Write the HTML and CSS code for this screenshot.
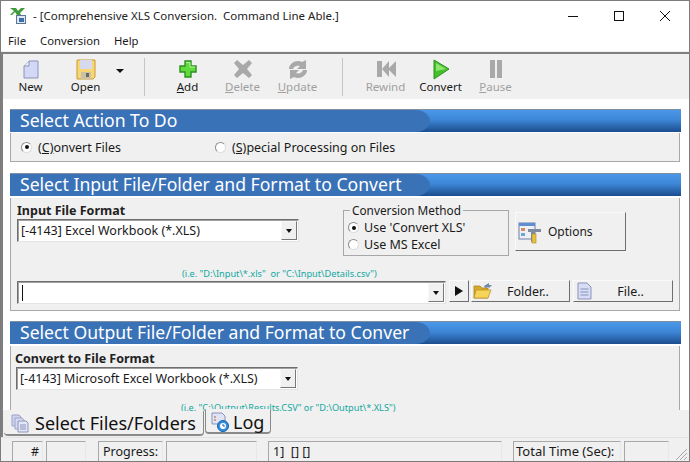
FILE: index.html
```html
<!DOCTYPE html>
<html lang="en">
<head>
  <meta charset="UTF-8">
  <meta name="viewport" content="width=device-width, initial-scale=1.0">
  <title>Comprehensive XLS Conversion</title>
  <link rel="stylesheet" href="styles.css">
</head>
<body>
  <div class="window">
    <!-- title bar -->
    <div class="titlebar">
      <svg class="app-icon" width="18" height="18" viewBox="0 0 18 18">
        <path d="M1 1h6l2 3 3-3h4l-5 5 1 2H8L6 5 3 8H1l4-4z" fill="#3f9a3a"/>
        <rect x="7.500" y="8.500" width="9" height="8" fill="#dfe7f2" stroke="#5b7596"/>
        <rect x="10" y="11" width="5" height="4" fill="#3d6ea8"/>
      </svg>
      <span class="title-text">- [Comprehensive XLS Conversion.  Command Line Able.]</span>
      <div class="win-buttons">
        <svg width="12" height="12" viewBox="0 0 12 12"><path d="M1 6.500h10" stroke="#111" fill="none"/></svg>
        <svg width="12" height="12" viewBox="0 0 12 12"><rect x="1.500" y="1.500" width="9" height="9" stroke="#111" fill="none"/></svg>
        <svg width="12" height="12" viewBox="0 0 12 12"><path d="M1 1l10 10M11 1L1 11" stroke="#111" fill="none"/></svg>
      </div>
    </div>

    <div class="menubar">
      <span>File</span><span>Conversion</span><span>Help</span>
    </div>

    <!-- toolbar -->
    <div class="toolbar">
      <div class="tool">
        <svg width="24" height="24" viewBox="0 0 24 24"><path d="M10 4h9v17H5V9z" fill="#d3d8f6" stroke="#8a93b8"/><path d="M10 4v5H5" fill="#eef0fc" stroke="#8a93b8"/></svg>
        <span>New</span>
      </div>
      <div class="tool">
        <svg width="24" height="24" viewBox="0 0 24 24"><path d="M3 3h18v17l-2 2H3z" fill="#f7d774" stroke="#c99a2e"/><rect x="6" y="3" width="12" height="9" fill="#d7d9ee"/><rect x="7" y="15" width="10" height="7" fill="#c9c2a8"/><rect x="12" y="16" width="3" height="4" fill="#6d6a5c"/></svg>
        <span>Open</span>
      </div>
      <div class="tool-arrow"><i></i></div>
      <div class="tool-sep"></div>
      <div class="tool">
        <svg width="24" height="24" viewBox="0 0 24 24"><path d="M9 4h6v5h5v6h-5v5H9v-5H4V9h5z" fill="#5fdc3c" stroke="#2d8f22" stroke-width="1.400"/><path d="M10 5.500h4v4.500h5" fill="none" stroke="#b8f59c"/></svg>
        <span><u>A</u>dd</span>
      </div>
      <div class="tool disabled">
        <svg width="24" height="24" viewBox="0 0 24 24"><path d="M6 3l6 5 6-5 3 3-5 6 5 6-3 3-6-5-6 5-3-3 5-6-5-6z" fill="#a9a9a9"/></svg>
        <span><u>D</u>elete</span>
      </div>
      <div class="tool disabled">
        <svg width="24" height="24" viewBox="0 0 24 24"><path d="M3 12c0-6 8-10 13-7l4-2v9h-9l3-3c-3-1-6 0-7 3zM21 13c0 6-8 10-13 7l-4 2v-9h9l-3 3c3 1 6 0 7-3z" fill="#a9a9a9"/></svg>
        <span><u>U</u>pdate</span>
      </div>
      <div class="tool-sep"></div>
      <div class="tool disabled">
        <svg width="24" height="24" viewBox="0 0 24 24"><path d="M3 4h5v16H3zM8 12l7-8v16zM14 12l8-8v16z" fill="#a9a9a9"/></svg>
        <span>Rewind</span>
      </div>
      <div class="tool">
        <svg width="24" height="24" viewBox="0 0 24 24"><path d="M5 3l15 9-15 10z" fill="#45c02c" stroke="#2f8f22"/><path d="M7 6l10 6-10 2z" fill="#8ce66a"/></svg>
        <span>Convert</span>
      </div>
      <div class="tool disabled">
        <svg width="24" height="24" viewBox="0 0 24 24"><path d="M6 3h5v18H6zM13 3h5v18h-5z" fill="#a9a9a9"/></svg>
        <span><u>P</u>ause</span>
      </div>
    </div>

    <div class="content">
      <!-- action -->
      <section class="section section-action">
        <h2 class="bar"><span>Select Action To Do</span></h2>
        <div class="panel action-panel">
          <label class="radio action-first"><i class="dot on"></i><span><u>(C)</u>onvert Files</span></label>
          <label class="radio"><i class="dot"></i><span><u>(S)</u>pecial Processing on Files</span></label>
        </div>
      </section>

      <!-- input -->
      <section class="section">
        <h2 class="bar"><span>Select Input File/Folder and Format to Convert</span></h2>
        <div class="panel input-panel">
          <div class="format-row">
            <div class="format-col">
              <div class="field-label">Input File Format</div>
              <div class="combo format-combo"><span class="combo-text">[-4143] Excel Workbook (*.XLS)</span><b class="combo-btn"><i></i></b></div>
            </div>
            <fieldset class="method">
              <legend>Conversion Method</legend>
              <label class="radio"><i class="dot on"></i><span>Use 'Convert XLS'</span></label>
              <label class="radio"><i class="dot"></i><span>Use MS Excel</span></label>
            </fieldset>
            <div class="btn options-btn">
              <svg width="26" height="26" viewBox="0 0 26 26"><rect x="2" y="4" width="16" height="16" fill="#eef0f6" stroke="#6f7fa8"/><rect x="2" y="4" width="16" height="3" fill="#5f8fd0"/><rect x="4" y="9" width="4" height="3" fill="#d88a5a"/><rect x="4" y="14" width="4" height="3" fill="#6aa8d8"/><path d="M11 10h13v3H18v10h-4V13h-3z" fill="#7d8aa0"/><rect x="15" y="15" width="4" height="9" fill="#e8c040" stroke="#a88a20" stroke-width=".6"/></svg>
              <span>Options</span>
            </div>
          </div>
          <div class="hint input-hint">(i.e. "D:\Input\*.xls"  or "C:\Input\Details.csv")</div>
          <div class="path-row">
            <div class="combo path-combo"><span class="caret"></span><b class="combo-btn"><i></i></b></div>
            <div class="btn play-btn"><i></i></div>
            <div class="btn browse-btn">
              <svg width="20" height="20" viewBox="0 0 20 20"><path d="M1 5h6l2 2h6v10H1z" fill="#d9a92a" stroke="#a67c14" stroke-width=".7"/><path d="M3 9h15l-3 8H1z" fill="#f6d45a" stroke="#b88d1c" stroke-width=".7"/><path d="M11 5l5-3v2l3 0-3 3-1-1-3 1z" fill="#6f87a8"/></svg>
              <span>Folder..</span>
            </div>
            <div class="btn browse-btn file-btn">
              <svg width="20" height="20" viewBox="0 0 20 20"><path d="M3 2h9l4 4v12H3z" fill="#d8dcf6" stroke="#8a93b8"/><path d="M5.500 8h8M5.500 11h8M5.500 14h8" stroke="#8a93b8"/></svg>
              <span>File..</span>
            </div>
          </div>
        </div>
      </section>

      <!-- output -->
      <section class="section section-output">
        <h2 class="bar output-bar"><span>Select Output File/Folder and Format to Conver</span></h2>
        <div class="panel output-panel">
          <div class="field-label">Convert to File Format</div>
          <div class="combo format-combo"><span class="combo-text">[-4143] Microsoft Excel Workbook (*.XLS)</span><b class="combo-btn"><i></i></b></div>
          <div class="hint output-hint">(i.e. "C:\Output\Results.CSV" or "D:\Output\*.XLS")</div>
        </div>
      </section>
    </div>

    <!-- tabs -->
    <div class="tabs">
      <div class="tab tab-active">
        <svg width="20" height="20" viewBox="0 0 20 20"><path d="M2 2h7l2 2v9H2z" fill="#cfd3ee" stroke="#9aa2c8"/><path d="M5 5h7l2 2v9H5z" fill="#d9dcf4" stroke="#9aa2c8"/><path d="M8 8h8l2 2v9H8z" fill="#e3e6f8" stroke="#8a93b8"/><path d="M10 12h6M10 14h6M10 16h6" stroke="#8a93b8"/></svg>
        <span>Select Files/Folders</span>
      </div>
      <div class="tab tab-log">
        <svg width="20" height="20" viewBox="0 0 20 20"><path d="M2 1h10l3 3v8H2z" fill="#dfe3f6" stroke="#8a93b8"/><path d="M4 5h2M4 8h2" stroke="#c05a30"/><circle cx="13" cy="14" r="5.500" fill="#2f8fe0" stroke="#1c5fa8"/><circle cx="13" cy="14" r="3" fill="#fff"/><path d="M13 12v2h2" stroke="#1c5fa8" fill="none"/></svg>
        <span>Log</span>
      </div>
    </div>

    <!-- status bar -->
    <div class="statusbar">
      <div class="cell c-num">#</div>
      <div class="cell c-count"></div>
      <div class="cell c-progress">Progress:</div>
      <div class="cell c-bar"></div>
      <div class="cell c-msg">1]  [] []</div>
      <div class="cell c-total">Total Time (Sec):</div>
      <div class="cell c-time"></div>
      <svg class="grip" width="14" height="14" viewBox="0 0 14 14"><path d="M13 2L2 13M13 6L6 13M13 10L10 13" stroke="#a8a8a8" fill="none"/></svg>
    </div>
  </div>
</body>
</html>
```

FILE: styles.css
```css
html, body { margin: 0; padding: 0; }
body { width: 690px; height: 462px; overflow: hidden; font-family: "Noto Sans", sans-serif; font-size: 12.500px; color: #1a1a1a; background: #fff; }

.window { width: 690px; height: 462px; box-sizing: border-box; border: 1px solid #7c7c7c; border-bottom: 0; display: flex; flex-direction: column; overflow: hidden; background: #f0f0f0; }

/* title + menu */
.titlebar { height: 29px; flex: none; display: flex; align-items: center; padding-left: 8px; background: #fff; }
.app-icon { flex: none; margin-right: 6px; }
.title-text { white-space: pre; font-size: 11.500px; color: #222; }
.win-buttons { margin-left: auto; display: flex; gap: 34px; padding-right: 18px; }
.menubar { height: 21px; flex: none; display: flex; gap: 14px; align-items: center; padding-left: 7px; font-size: 11.300px; background: #fff; }

/* toolbar */
.toolbar { flex: none; display: flex; padding-top: 3px; height: 42px; background: #f0f0f0; border-top: 2px solid #7f7f7f; border-left: 2px solid #7f7f7f; margin-top: 1px; }
.tool { width: 55px; display: flex; flex-direction: column; align-items: center; font-size: 11.500px; line-height: 14px; }
.tool svg { flex: none; height: 24px; margin-bottom: -1px; }
.tool.disabled { color: #a0a0a0; }
.tool-arrow { width: 14px; display: flex; justify-content: center; padding-top: 12px; }
.tool-arrow i { width: 0; height: 0; border: 4px solid transparent; border-top: 4px solid #111; border-bottom: 0; }
.tool-sep { width: 1px; height: 38px; background: #c4c4c4; margin: 1px 15px 0 17px; }

/* sections */
.content { flex: none; height: 311px; padding: 10px 0 0 9px; background: #fff; border-left: 2px solid #7f7f7f; box-sizing: border-box; }
.section { width: 671px; margin-bottom: 10px; margin-left: -2px; }
.section-action { margin-bottom: 11px; }
.section-output { margin-bottom: 0; }
.bar { margin: 0; height: 23px; border-top: 1px solid #7f8f9f; box-sizing: border-box; background: linear-gradient(#4a97e8, #3d86d6 45%, #1b4d8d); display: flex; font-weight: normal; font-size: 17.600px; color: #fff; }
.bar span { width: 420px; padding-left: 10px; box-sizing: border-box; background: #3a72b8; line-height: 21px; white-space: nowrap; border-radius: 0 16px 16px 0 / 0 12px 12px 0; }
.panel { background: #f0f0f0; border: 1px solid #a8a8a8; border-top: 0; margin-right: 1px; box-sizing: border-box; }

.action-panel { height: 29px; margin-top: 1px; display: flex; align-items: center; padding: 0 0 0 10px; }
.action-first { width: 194px; }
.radio { display: flex; align-items: center; gap: 6px; }
.dot { width: 11px; height: 11px; flex: none; box-sizing: border-box; border-radius: 50%; background: #fff; border: 1px solid #8c8c8c; border-right-color: #ddd; border-bottom-color: #ddd; display: flex; align-items: center; justify-content: center; }
.dot.on::after { content: ""; width: 4px; height: 4px; border-radius: 50%; background: #111; }

.input-panel { height: 113px; margin-top: 2px; padding: 5px 6px 0; }
.format-row { display: flex; align-items: flex-start; }
.format-col { width: 326px; }
.field-label { font-weight: bold; font-size: 12.500px; line-height: 16px; color: #222; }
.combo { display: flex; height: 23px; background: #fff; box-sizing: border-box; border: 1px solid; border-color: #6e6e6e #e4e4e4 #e4e4e4 #6e6e6e; box-shadow: inset 1px 1px 0 #a0a0a0; align-items: center; }
.format-combo { width: 282px; }
.combo-text { padding-left: 3px; white-space: nowrap; flex: 1; }
.combo-btn { width: 16px; height: 19px; margin-right: 1px; flex: none; box-sizing: border-box; background: #f0f0f0; border: 1px solid; border-color: #f8f8f8 #777 #777 #f8f8f8; display: flex; align-items: center; justify-content: center; }
.combo-btn i { width: 0; height: 0; border: 3px solid transparent; border-top: 4px solid #111; border-bottom: 0; }

.method { width: 166px; height: 53px; box-sizing: border-box; margin: 0 6px 0 0; padding: 2px 0 0 4px; border: 1px solid #a8a8a8; }
.method legend { padding: 0 2px; margin-left: 2px; line-height: 14px; font-size: 11.800px; }
.method .radio { height: 17px; gap: 5px; }

.btn { background: #f0f0f0; box-sizing: border-box; border: 1px solid; border-color: #fafafa #6e6e6e #6e6e6e #fafafa; display: flex; align-items: center; }
.options-btn { width: 111px; height: 39px; margin-top: 9px; padding-left: 1px; gap: 5px; font-size: 12px; }

.hint { color: #12a8a0; font-size: 9.200px; line-height: 11px; white-space: pre; }
.input-hint { margin: 12px 0 0 165px; }
.path-row { display: flex; margin-top: 1px; align-items: flex-start; }
.path-combo { width: 430px; height: 23px; padding-left: 4px; margin-top: 1px; }
.caret { width: 1px; height: 16px; background: #111; }
.path-combo .combo-btn { margin-left: auto; }
.play-btn { width: 20px; height: 22px; margin-left: 3px; justify-content: center; }
.play-btn i { width: 0; height: 0; border: 5px solid transparent; border-left: 8px solid #111; border-right: 0; }
.browse-btn { width: 100px; height: 22px; margin-left: 2px; padding: 0 6px 0 1px; }
.browse-btn span { flex: 1; text-align: center; }
.file-btn { margin-left: 3px; }

.output-bar { margin-bottom: 2px; }
.output-panel { height: 64px; border-bottom: 0; padding: 5px 0 0 4px; }
.output-panel .combo { margin-left: 1px; }
.output-hint { margin: 12px 0 0 166px; }

/* tabs */
.tabs { height: 27px; flex: none; display: flex; align-items: flex-start; border-left: 2px solid #7f7f7f; padding-left: 1px; }
.tab { display: flex; align-items: center; box-sizing: border-box; background: #f0f0f0; font-size: 18px; color: #111; padding-top: 1px; }
.tab-active { width: 200px; height: 25px; padding-left: 6px; gap: 5px; margin-top: 1px; border-bottom: 2px solid #8a8a8a; border-right: 1px solid #8a8a8a; border-radius: 0 0 4px 4px; }
.tab-log { width: 66px; height: 25px; margin-top: -1px; margin-left: 1px; padding-left: 4px; gap: 3px; border: 1px solid #8a8a8a; border-top-color: #f0f0f0; border-bottom-width: 2px; border-radius: 0 0 4px 4px; }

/* status */
.statusbar { height: 25px; flex: none; display: flex; align-items: flex-end; background: #f0f0f0; padding-left: 11px; position: relative; border-top: 1px solid #e2e2e2; border-bottom: 1px solid #7c7c7c; box-sizing: border-box; }
.cell { height: 20px; box-sizing: border-box; border-top: 1px solid #a8a8a8; border-left: 1px solid #a8a8a8; border-right: 1px solid #e8e8e8; line-height: 19px; white-space: pre; padding-left: 3px; margin-right: 3px; }
.c-num { width: 31px; text-align: right; padding-right: 3px; }
.c-count { width: 40px; margin-right: 12px; }
.c-progress { width: 65px; padding-left: 4px; }
.c-bar { width: 91px; margin-right: 11px; }
.c-msg { width: 234px; margin-right: 11px; padding-left: 4px; }
.c-total { width: 108px; font-size: 13px; padding-left: 2px; }
.c-time { width: 45px; }
.grip { position: absolute; right: 1px; bottom: 0; }
```
